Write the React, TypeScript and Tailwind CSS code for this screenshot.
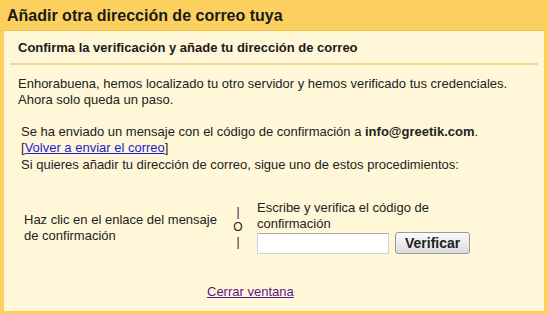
export default function App() {
  return (
    <div className="w-[548px] h-[314px] bg-[#fcd05e] flex flex-col font-['Liberation_Sans',Arial,sans-serif] text-[13px] leading-[16px] text-[#222]">
      <div className="h-[31px] flex items-center pl-[7px] pt-[1px] border-b border-[#f3c24f]">
        <h1 className="text-[16px] font-bold text-[#1a1a1a]">Añadir otra dirección de correo tuya</h1>
      </div>
      <div className="flex-1 mx-[4px] mb-[3px] bg-[#fff7d8] flex flex-col">
        <div className="pl-[14px] pt-[9px] pb-[7px] font-bold text-[#1a1a1a]">
          Confirma la verificación y añade tu dirección de correo
        </div>
        <div className="mx-[6px] h-[2px] bg-[#f1db92]" />
        <div className="pl-[14px] pt-[11px]">
          <p>Enhorabuena, hemos localizado tu otro servidor y hemos verificado tus credenciales.</p>
          <p>Ahora solo queda un paso.</p>
        </div>
        <div className="pl-[17px] pt-[16px]">
          <p>
            Se ha enviado un mensaje con el código de confirmación a <b>info@greetik.com</b>.
          </p>
          <p>
            [<a href="#" className="text-[#1d1dcc] underline">Volver a enviar el correo</a>]
          </p>
          <p className="mt-[1px]">Si quieres añadir tu dirección de correo, sigue uno de estos procedimientos:</p>
        </div>
        <div className="flex items-center pl-[20px] pt-[27px]">
          <div className="w-[200px] mt-[2px]">
            Haz clic en el enlace del mensaje de confirmación
          </div>
          <div className="w-[24px] flex flex-col items-center text-[12px] leading-[15px] ml-[2px]">
            <span>|</span>
            <span>O</span>
            <span>|</span>
          </div>
          <div className="flex flex-col pl-[7px]">
            <div className="w-[200px]">Escribe y verifica el código de confirmación</div>
            <div className="flex items-center gap-[6px]">
              <input className="w-[132px] h-[21px] bg-white border border-[#d4d4d4] border-t-[#aaaaaa]" />
              <button className="h-[22px] px-[9px] font-bold text-[14px] text-[#222] rounded-[3px] border border-[#9a9a9a] bg-gradient-to-b from-[#fbfbfb] to-[#dcdcdc]">
                Verificar
              </button>
            </div>
          </div>
        </div>
        <div className="pl-[203px] pt-[30px]">
          <a href="#" className="text-[#5a1a8c] underline">Cerrar ventana</a>
        </div>
      </div>
    </div>
  )
}
